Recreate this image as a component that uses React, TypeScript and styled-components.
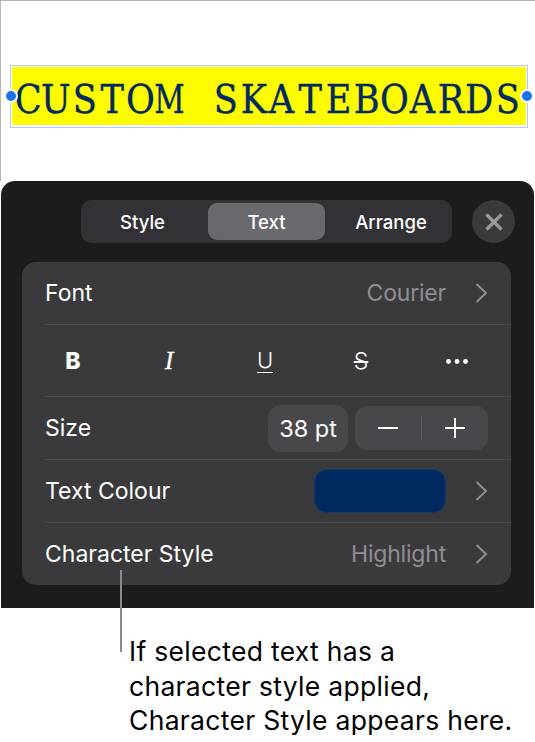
import styled, { createGlobalStyle } from 'styled-components';

const GlobalStyle = createGlobalStyle`
  html, body {
    margin: 0;
    padding: 0;
    background: #ffffff;
  }
  body {
    font-family: Inter, "Noto Sans", sans-serif;
  }
`;

const Page = styled.div`
  position: relative;
  width: 535px;
  height: 742px;
  overflow: hidden;
  background: #ffffff;
`;

const Canvas = styled.div`
  height: 181px;
  box-sizing: border-box;
  border-left: 1px solid #b4b4b4;
  border-top: 1px solid #b4b4b4;
  padding: 64px 7px 0 9px;
`;

const Selection = styled.div`
  position: relative;
  height: 63px;
  box-sizing: border-box;
  border: 1.5px solid #b3c9f5;
  padding: 1px;
`;

const Highlight = styled.div`
  display: flex;
  height: 58px;
  padding-left: 2px;
  background: #fffb00;
  color: #002a60;
  font-family: "DejaVu Serif", "Liberation Serif", serif;
  font-size: 40px;
  line-height: 64px;
  white-space: pre;
  -webkit-text-stroke: 0.4px #002a60;
`;

const Cell = styled.span`
  flex: 0 0 28.2px;
  min-width: 0;
  width: 28.2px;
  display: flex;
  justify-content: center;
`;

const Glyph = styled.span<{ $wide?: boolean }>`
  display: inline-block;
  flex: none;
  transform: scaleX(${(p) => (p.$wide ? 0.74 : 0.88)});
`;

const Handle = styled.span<{ $side: 'left' | 'right' }>`
  position: absolute;
  top: 23px;
  ${(p) => (p.$side === 'left' ? 'left: -7px;' : 'right: -7px;')}
  width: 10px;
  height: 10px;
  border-radius: 50%;
  background: #1a73e8;
  border: 2px solid #ffffff;
  z-index: 1;
`;

const Panel = styled.div`
  width: 533px;
  height: 427px;
  margin-left: 1px;
  box-sizing: border-box;
  background: #1c1c1e;
  border-radius: 14px 14px 0 0;
  padding: 19px 22px 0 21px;
`;

const TopBar = styled.div`
  display: flex;
  justify-content: flex-end;
  align-items: center;
  gap: 20px;
  margin-right: -3px;
`;

const Tabs = styled.div`
  display: grid;
  grid-template-columns: 124px 117px 124px;
  width: 371px;
  height: 43px;
  box-sizing: border-box;
  padding: 3px;
  background: #323236;
  border-radius: 11px;
`;

const Tab = styled.div<{ $active?: boolean }>`
  display: flex;
  align-items: center;
  justify-content: center;
  border-radius: 9px;
  color: #ffffff;
  font-size: 18.5px;
  font-weight: 500;
  background: ${(p) => (p.$active ? '#68686d' : 'transparent')};

  &:first-child {
    padding-right: 7px;
  }

  &:last-child {
    padding-left: 8px;
  }
`;

const Close = styled.div`
  display: flex;
  align-items: center;
  justify-content: center;
  width: 43px;
  height: 43px;
  border-radius: 50%;
  background: #3a3a3c;
`;

const Card = styled.div`
  margin-top: 19px;
  width: 489px;
  background: #3a3a3c;
  border-radius: 14px;
  overflow: hidden;
`;

const Row = styled.div<{ $last?: boolean }>`
  display: flex;
  align-items: center;
  justify-content: space-between;
  height: 62px;
  margin-left: 23px;
  padding-right: 23px;
  border-bottom: ${(p) => (p.$last ? 'none' : '1px solid #4b4b4e')};
`;

const Label = styled.span`
  color: #ffffff;
  font-size: 23px;
`;

const Trailing = styled.div`
  display: flex;
  align-items: center;
  gap: 29px;
`;

const Value = styled.span`
  color: #8e8e93;
  font-size: 23px;
  letter-spacing: -0.2px;
`;

const Formats = styled.div`
  display: grid;
  grid-template-columns: repeat(5, 96px);
  height: 72px;
  margin-left: 3px;
  position: relative;

  &::after {
    content: '';
    position: absolute;
    left: 20px;
    right: -6px;
    bottom: 0;
    height: 1px;
    background: #4b4b4e;
  }
`;

const FormatButton = styled.div`
  display: flex;
  align-items: center;
  justify-content: center;
  color: #ffffff;
`;

const Bold = styled.span`
  font-size: 23px;
  font-weight: 800;
`;

const Italic = styled.span`
  font-family: "Liberation Serif", serif;
  font-style: italic;
  font-size: 26px;
  -webkit-text-stroke: 0.3px #ffffff;
`;

const Underline = styled.span`
  font-size: 22px;
  font-weight: 300;
  border-bottom: 1.5px solid #ffffff;
  line-height: 23px;
`;

const Strike = styled.span`
  font-size: 23px;
  font-weight: 300;
  padding: 0 3px;
  text-decoration: line-through;
  text-decoration-thickness: 1.5px;
`;

const SizeControls = styled.div`
  display: flex;
  align-items: center;
  gap: 7px;
`;

const SizeValue = styled.div`
  display: flex;
  align-items: center;
  justify-content: center;
  width: 80px;
  height: 47px;
  border-radius: 13px;
  background: #48484c;
  color: #ffffff;
  font-size: 23.5px;
`;

const Stepper = styled.div`
  display: grid;
  grid-template-columns: 1fr 1fr;
  width: 133px;
  height: 44px;
  border-radius: 12px;
  background: #48484c;
`;

const StepButton = styled.div<{ $divider?: boolean }>`
  display: flex;
  align-items: center;
  justify-content: center;
  position: relative;
  ${(p) =>
    p.$divider &&
    `&::after {
      content: '';
      position: absolute;
      right: 0;
      top: 10px;
      bottom: 10px;
      width: 1px;
      background: #5e5e62;
    }`}
`;

const Swatch = styled.div`
  width: 132px;
  height: 44px;
  box-sizing: border-box;
  border: 1px solid #12396d;
  border-radius: 13px;
  background: #002a60;
`;

const Leader = styled.div`
  position: absolute;
  left: 120px;
  top: 570px;
  width: 2px;
  height: 82px;
  background: #8a8a8a;
`;

const Caption = styled.p`
  margin: 0;
  padding: 26px 0 0 129px;
  color: #000000;
  font-size: 26.5px;
  letter-spacing: 0.3px;
  line-height: 34.5px;
  white-space: nowrap;
`;

const Chevron = () => (
  <svg width="13" height="22" viewBox="0 0 13 22" fill="none">
    <path d="M1.5 2 L11 11 L1.5 20" stroke="#8e8e93" strokeWidth="2" />
  </svg>
);

const headline = 'CUSTOM SKATEBOARDS'.split('');

const App = () => {
  return (
    <Page>
      <GlobalStyle />
      <Canvas>
        <Selection>
          <Handle $side="left" />
          <Highlight>
            {headline.map((letter, i) => (
              <Cell key={i}>
                <Glyph $wide={letter === 'M'}>{letter}</Glyph>
              </Cell>
            ))}
          </Highlight>
          <Handle $side="right" />
        </Selection>
      </Canvas>
      <Panel>
        <TopBar>
          <Tabs>
            <Tab>Style</Tab>
            <Tab $active>Text</Tab>
            <Tab>Arrange</Tab>
          </Tabs>
          <Close>
            <svg width="20" height="20" viewBox="0 0 20 20" fill="none">
              <path d="M2.5 2.5 L17.5 17.5 M17.5 2.5 L2.5 17.5" stroke="#98989d" strokeWidth="3.4" />
            </svg>
          </Close>
        </TopBar>
        <Card>
          <Row>
            <Label>Font</Label>
            <Trailing>
              <Value>Courier</Value>
              <Chevron />
            </Trailing>
          </Row>
          <Formats>
            <FormatButton><Bold>B</Bold></FormatButton>
            <FormatButton><Italic>I</Italic></FormatButton>
            <FormatButton><Underline>U</Underline></FormatButton>
            <FormatButton><Strike>S</Strike></FormatButton>
            <FormatButton>
              <svg width="22" height="5" viewBox="0 0 22 5" fill="#ffffff">
                <circle cx="2.5" cy="2.5" r="2.4" />
                <circle cx="11" cy="2.5" r="2.4" />
                <circle cx="19.5" cy="2.5" r="2.4" />
              </svg>
            </FormatButton>
          </Formats>
          <Row>
            <Label>Size</Label>
            <SizeControls>
              <SizeValue>38 pt</SizeValue>
              <Stepper>
                <StepButton $divider>
                  <svg width="20" height="2" viewBox="0 0 20 2">
                    <rect width="20" height="2" fill="#ffffff" />
                  </svg>
                </StepButton>
                <StepButton>
                  <svg width="20" height="20" viewBox="0 0 20 20">
                    <path d="M0 10 H20 M10 0 V20" stroke="#ffffff" strokeWidth="2" />
                  </svg>
                </StepButton>
              </Stepper>
            </SizeControls>
          </Row>
          <Row>
            <Label>Text Colour</Label>
            <Trailing>
              <Swatch />
              <Chevron />
            </Trailing>
          </Row>
          <Row $last>
            <Label>Character Style</Label>
            <Trailing>
              <Value>Highlight</Value>
              <Chevron />
            </Trailing>
          </Row>
        </Card>
      </Panel>
      <Leader />
      <Caption>
        If selected text has a
        <br />
        character style applied,
        <br />
        Character Style appears here.
      </Caption>
    </Page>
  );
};

export default App;
